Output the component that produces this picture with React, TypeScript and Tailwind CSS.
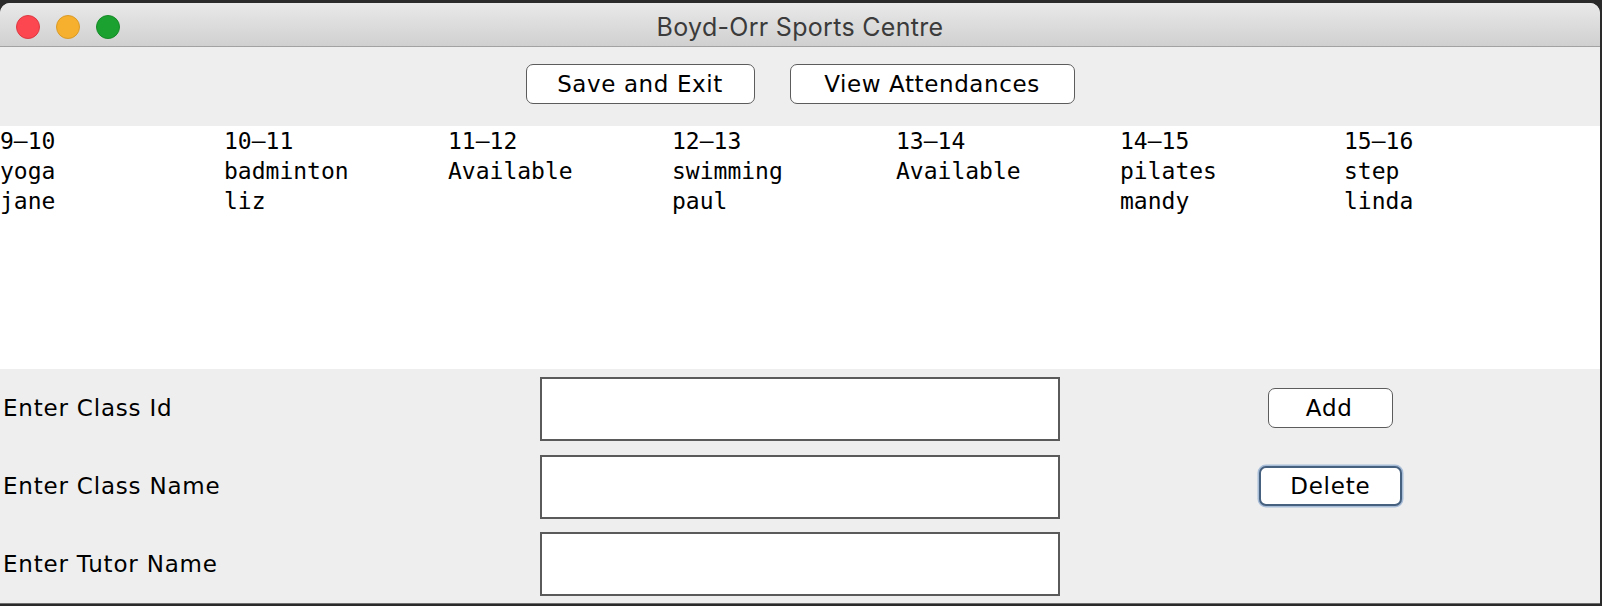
import React from "react";

const slots = [
  ["9\u201310", "yoga", "jane"],
  ["10\u201311", "badminton", "liz"],
  ["11\u201312", "Available", ""],
  ["12\u201313", "swimming", "paul"],
  ["13\u201314", "Available", ""],
  ["14\u201315", "pilates", "mandy"],
  ["15\u201316", "step", "linda"],
];

const labelFont = { fontFamily: '"DejaVu Sans", "Liberation Sans", sans-serif' };

function Field() {
  return <div className="h-[64px] w-full bg-white border-2 border-[#5a5a5a]" />;
}

export default function App() {
  return (
    <div className="w-[1602px] h-[606px] bg-[#2a2a2a] pt-[3px] overflow-hidden">
      <div className="w-[1600px] h-[601px] rounded-t-[10px] overflow-hidden bg-[#eeeeee] flex flex-col border-b border-[#6e6e6e]">
        {/* Title bar */}
        <div className="h-[44px] shrink-0 grid grid-cols-[1fr_auto_1fr] items-center pt-[5px] bg-linear-to-b from-[#e9e9e9] to-[#d0d0d0] border-b border-[#a2a2a2]">
          <div className="flex items-center gap-[16px] pl-[16px]">
            <span className="w-[24px] h-[24px] rounded-full bg-[#fc4650] border border-[#dc3a42]" />
            <span className="w-[24px] h-[24px] rounded-full bg-[#f6b02d] border border-[#d99a28]" />
            <span className="w-[24px] h-[24px] rounded-full bg-[#1ba12f] border border-[#168a28]" />
          </div>
          <div
            className="text-[25px] text-[#3b3b3b] tracking-[0.3px] leading-none"
            style={{ fontFamily: 'Inter, "Liberation Sans", sans-serif' }}
          >
            Boyd-Orr Sports Centre
          </div>
          <div />
        </div>

        {/* Toolbar */}
        <div className="h-[79px] shrink-0 flex justify-center gap-[35px] pt-[17px]">
          <button
            className="h-[40px] w-[229px] bg-white border border-[#5c5c5c] rounded-[7px] text-[23px] tracking-[0.6px] text-black flex items-center justify-center"
            style={labelFont}
          >
            Save and Exit
          </button>
          <button
            className="h-[40px] w-[285px] bg-white border border-[#5c5c5c] rounded-[7px] text-[23px] tracking-[0.6px] text-black flex items-center justify-center"
            style={labelFont}
          >
            View Attendances
          </button>
        </div>

        {/* Schedule */}
        <div
          className="h-[243px] shrink-0 bg-white grid grid-cols-[repeat(7,224px)] content-start text-[23px] leading-[30px] text-black"
          style={{ fontFamily: '"DejaVu Sans Mono", "Liberation Mono", monospace' }}
        >
          {slots.map((s, i) => (
            <div key={i} className="flex flex-col">
              {s.map((t, j) => (
                <div key={j} className="h-[30px] whitespace-pre">{t}</div>
              ))}
            </div>
          ))}
        </div>

        {/* Form */}
        <div className="h-[234px] shrink-0 grid grid-cols-3 grid-rows-3 text-[23px] text-black tracking-[0.8px]" style={labelFont}>
          <div className="flex items-center pl-[3px]">Enter Class Id</div>
          <div className="flex items-start pt-[8px] px-[7px]"><Field /></div>
          <div className="flex items-center justify-center pr-[6px]">
            <button className="h-[40px] w-[125px] bg-white border border-[#5c5c5c] rounded-[7px] flex items-center justify-center pr-[2px]">
              Add
            </button>
          </div>

          <div className="flex items-center pl-[3px]">Enter Class Name</div>
          <div className="flex items-start pt-[8px] px-[7px]"><Field /></div>
          <div className="flex items-center justify-center pr-[6px]">
            <button className="h-[40px] w-[143px] bg-white border-2 border-[#46607f] shadow-[0_0_0_1.5px_#a8bdd7] rounded-[7px] flex items-center justify-center">
              Delete
            </button>
          </div>

          <div className="flex items-center pl-[3px]">Enter Tutor Name</div>
          <div className="flex items-start pt-[7px] px-[7px]"><Field /></div>
          <div />
        </div>
      </div>
    </div>
  );
}
